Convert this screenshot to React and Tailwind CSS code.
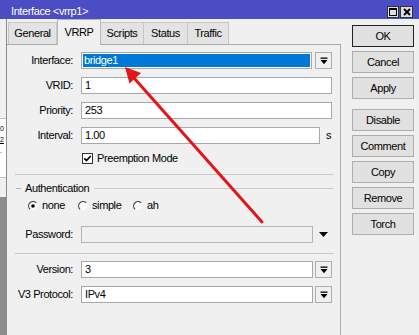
import React from "react";

const Drop = () => (
  <div className="w-[17px] h-full shrink-0 border border-[#adadad] bg-[#f0f0f0] flex items-center justify-center">
    <svg width="8" height="8" viewBox="0 0 8 8">
      <rect x="0.5" y="0.5" width="7" height="1.3" fill="#000" />
      <polygon points="0.5,3 7.5,3 4,7.2" fill="#000" />
    </svg>
  </div>
);

const Input = ({ children, className = "" }) => (
  <div className={"h-full bg-white border border-[#a8a8a8] flex items-center px-[3px] " + className}>
    {children}
  </div>
);

const Row = ({ label, children, className = "" }) => (
  <div className={"flex items-center h-[17px] pr-[2px] shrink-0 " + className}>
    <div className="w-[58px] text-right shrink-0 whitespace-nowrap">{label}</div>
    <div className="ml-[8px] flex-1 flex items-center h-full">{children}</div>
  </div>
);

const Radio = ({ on }) => (
  <svg width="10" height="10" viewBox="0 0 10 10" className="shrink-0">
    <circle cx="5" cy="5" r="4.4" fill="#fafafa" />
    <path d="M2 8.2 A4.3 4.3 0 0 1 8.2 1.8" stroke="#444" strokeWidth="1.2" fill="none" />
    {on && <circle cx="5" cy="5" r="1.8" fill="#000" />}
  </svg>
);

const Tab = ({ children, w, selected }) => (
  <div
    className={
      selected
        ? "relative z-10 -mb-px h-[26px] bg-[#f0f0f0] border border-b-0 border-[#b9b9b9] flex items-center justify-center shrink-0"
        : "h-[22px] bg-[#e3e3e3] border border-b-0 border-l-0 border-[#c6c6c6] flex items-center justify-center shrink-0"
    }
    style={{ width: w }}
  >
    {children}
  </div>
);

const Btn = ({ children, def, className = "" }) => (
  <div
    className={
      "h-[22px] flex items-center justify-center bg-[#e1e1e1] border " +
      (def ? "border-[#222] " : "border-[#adadad] ") +
      className
    }
  >
    {children}
  </div>
);

export default function App() {
  return (
    <div className="relative w-[419px] h-[335px] overflow-hidden bg-[#f0f0f0] text-black text-[11px] tracking-[-0.4px] font-['Liberation_Sans',Arial,sans-serif] leading-none">
      {/* Title bar */}
      <div className="h-[19px] bg-[#4c4cc4] flex items-center pl-[11px] pr-[6px]">
        <span className="text-white pt-[3px]">Interface &lt;vrrp1&gt;</span>
        <div className="ml-auto flex gap-[1px] pt-[4px]">
          <div className="w-[12px] h-[12px] bg-[#dedede] border border-[#333] flex items-center justify-center">
            <svg width="8" height="8" viewBox="0 0 8 8">
              <rect x="0.5" y="0.5" width="7" height="7" fill="none" stroke="#000" />
              <rect x="0" y="0" width="8" height="2" fill="#000" />
            </svg>
          </div>
          <div className="w-[13px] h-[12px] bg-[#dedede] border border-[#333] flex items-center justify-center">
            <svg width="8" height="8" viewBox="0 0 8 8">
              <path d="M1 1 L7 7 M7 1 L1 7" stroke="#000" strokeWidth="1.8" />
            </svg>
          </div>
        </div>
      </div>

      <div className="flex h-[316px]">
        {/* background window strip */}
        <div className="w-[7px] shrink-0 flex flex-col border-r border-[#8a8a8a] overflow-hidden">
          <div className="h-[99px] bg-[#f0f0f0]" />
          <div className="h-[60px] bg-white border-y border-[#c0c0c0] text-[7px] tracking-normal leading-[11px] flex flex-col pt-[4px]">
            <span>0</span>
            <span className="underline">2</span>
            <span>.</span>
          </div>
          <div className="h-[19px] bg-[#f0f0f0]" />
          <div className="flex-1 bg-[#8c8c8c]" />
        </div>

        {/* left column: tabs + panel */}
        <div className="w-[334px] shrink-0 flex flex-col">
          <div className="h-[25px] flex items-end pl-[1px] shrink-0">
            <div className="h-[22px] w-[49px] bg-[#e3e3e3] border border-b-0 border-[#c6c6c6] flex items-center justify-center shrink-0">
              General
            </div>
            <Tab w={44} selected>
              VRRP
            </Tab>
            <Tab w={43}>Scripts</Tab>
            <Tab w={44}>Status</Tab>
            <Tab w={41}>Traffic</Tab>
          </div>

          <div className="flex-1 border-t border-r border-[#a9a9a9] flex flex-col pl-[8px] pr-[6px] pt-[7px]">
            <Row label="Interface:">
              <div className="h-full flex-1 border border-[#a8a8a8] bg-white p-[1px]">
                <div className="h-full bg-[#0078d7] text-white flex items-center px-[1px]">bridge1</div>
              </div>
              <div className="w-[3px]" />
              <Drop />
            </Row>
            <Row label="VRID:" className="mt-[8px]">
              <Input className="flex-1">1</Input>
            </Row>
            <Row label="Priority:" className="mt-[8px]">
              <Input className="flex-1">253</Input>
            </Row>
            <Row label="Interval:" className="mt-[8px]">
              <Input className="w-[239px]">1.00</Input>
              <span className="ml-[6px]">s</span>
            </Row>
            <div className="flex items-center h-[17px] mt-[6px] pl-[67px] shrink-0">
              <svg width="11" height="11" viewBox="0 0 11 11">
                <rect x="0.5" y="0.5" width="10" height="10" fill="#fff" stroke="#333" />
                <path d="M2.3 5.3 L4.5 7.6 L8.7 3" stroke="#000" strokeWidth="1.7" fill="none" />
              </svg>
              <span className="ml-[4px]">Preemption Mode</span>
            </div>

            <div className="h-px bg-[#c8c8c8] mt-[7px] shrink-0" />

            <div className="flex items-center h-[13px] mt-[7px] shrink-0">
              <div className="w-[5px] h-px bg-[#b0b0b0] ml-[1px]" />
              <span className="ml-[4px]">Authentication</span>
              <div className="flex-1 h-px bg-[#c8c8c8] ml-[5px]" />
            </div>

            <div className="flex items-center h-[13px] mt-[4px] pl-[13px] shrink-0">
              <div className="w-[50px] flex items-center">
                <Radio on />
                <span className="ml-[4px]">none</span>
              </div>
              <div className="w-[55px] flex items-center">
                <Radio />
                <span className="ml-[4px]">simple</span>
              </div>
              <div className="flex items-center">
                <Radio />
                <span className="ml-[4px]">ah</span>
              </div>
            </div>

            <Row label="Password:" className="mt-[14px]">
              <div className="h-full w-[232px] bg-[#f0f0f0] border border-[#b4b4b4]" />
              <svg width="9" height="5" viewBox="0 0 9 5" className="ml-[6px]">
                <polygon points="0,0 9,0 4.5,5" fill="#000" />
              </svg>
            </Row>

            <div className="h-px bg-[#c8c8c8] mt-[10px] shrink-0" />

            <Row label="Version:" className="mt-[7px]">
              <Input className="flex-1">3</Input>
              <div className="w-[2px]" />
              <Drop />
            </Row>
            <Row label="V3 Protocol:" className="mt-[8px]">
              <Input className="flex-1">IPv4</Input>
              <div className="w-[2px]" />
              <Drop />
            </Row>
          </div>
        </div>

        {/* buttons */}
        <div className="w-[62px] ml-[11px] shrink-0 flex flex-col gap-[4px] pt-[6px]">
          <Btn def>OK</Btn>
          <Btn>Cancel</Btn>
          <Btn>Apply</Btn>
          <Btn className="mt-[6px]">Disable</Btn>
          <Btn>Comment</Btn>
          <Btn>Copy</Btn>
          <Btn>Remove</Btn>
          <Btn>Torch</Btn>
        </div>
      </div>

      {/* red arrow annotation */}
      <svg className="absolute inset-0 pointer-events-none" width="419" height="335" viewBox="0 0 419 335">
        <line x1="262" y1="222" x2="134" y2="78" stroke="#e3151b" strokeWidth="3" strokeLinecap="round" />
        <polygon points="125,67 141,73 129.5,83.5" fill="#e3151b" />
      </svg>
    </div>
  );
}
